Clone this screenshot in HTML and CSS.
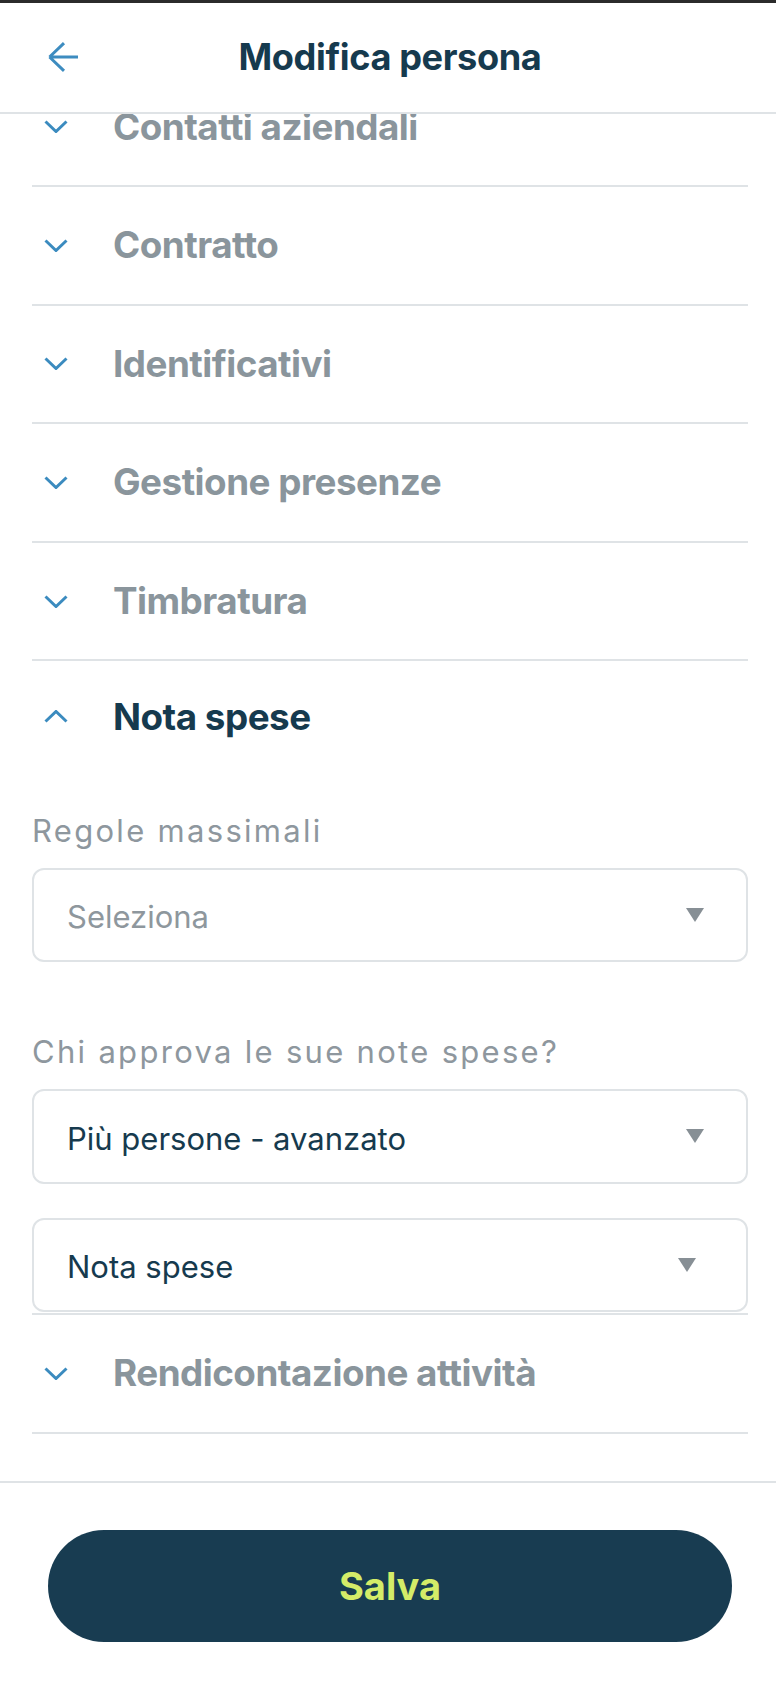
FILE: index.html
```html
<!DOCTYPE html>
<html lang="it">
<head>
<meta charset="utf-8">
<title>Modifica persona</title>
<link rel="stylesheet" href="styles.css">
</head>
<body>
<div class="app">
  <div class="statusbar"></div>
  <header class="topbar">
    <button class="back" aria-label="Indietro">
      <svg width="32" height="30" viewBox="0 0 32 30"><path d="M2.5 15 L17 1.2 M2.5 15 L17 28.8 M2.5 15 H31" fill="none" stroke="#3d8cc0" stroke-width="3"/></svg>
    </button>
    <h1 class="title">Modifica persona</h1>
    <span class="spacer"></span>
  </header>

  <main class="content">
    <div class="list">
      <div class="acc">
        <div class="acc-head">
          <svg class="chev" width="24" height="13" viewBox="0 0 24 13"><polyline points="1.5,1.5 12,11.5 22.5,1.5" fill="none" stroke="#3b8bbf" stroke-width="3"/></svg>
          <span class="acc-title">Contatti aziendali</span>
        </div>
      </div>
      <div class="acc">
        <div class="acc-head">
          <svg class="chev" width="24" height="13" viewBox="0 0 24 13"><polyline points="1.5,1.5 12,11.5 22.5,1.5" fill="none" stroke="#3b8bbf" stroke-width="3"/></svg>
          <span class="acc-title">Contratto</span>
        </div>
      </div>
      <div class="acc">
        <div class="acc-head">
          <svg class="chev" width="24" height="13" viewBox="0 0 24 13"><polyline points="1.5,1.5 12,11.5 22.5,1.5" fill="none" stroke="#3b8bbf" stroke-width="3"/></svg>
          <span class="acc-title">Identificativi</span>
        </div>
      </div>
      <div class="acc">
        <div class="acc-head">
          <svg class="chev" width="24" height="13" viewBox="0 0 24 13"><polyline points="1.5,1.5 12,11.5 22.5,1.5" fill="none" stroke="#3b8bbf" stroke-width="3"/></svg>
          <span class="acc-title">Gestione presenze</span>
        </div>
      </div>
      <div class="acc">
        <div class="acc-head">
          <svg class="chev" width="24" height="13" viewBox="0 0 24 13"><polyline points="1.5,1.5 12,11.5 22.5,1.5" fill="none" stroke="#3b8bbf" stroke-width="3"/></svg>
          <span class="acc-title">Timbratura</span>
        </div>
      </div>
      <div class="acc acc-open">
        <div class="acc-head">
          <svg class="chev chev-up" width="24" height="13" viewBox="0 0 24 13"><polyline points="1.5,11.5 12,1.5 22.5,11.5" fill="none" stroke="#3b8bbf" stroke-width="3"/></svg>
          <span class="acc-title">Nota spese</span>
        </div>
        <div class="acc-panel">
          <div class="field">
            <label class="field-label">Regole massimali</label>
            <div class="select">
              <span class="select-value placeholder">Seleziona</span>
              <span class="caret"></span>
            </div>
          </div>
          <div class="field field-second">
            <label class="field-label">Chi approva le sue note spese?</label>
            <div class="select">
              <span class="select-value">Più persone - avanzato</span>
              <span class="caret"></span>
            </div>
            <div class="select select-inner">
              <span class="select-value">Nota spese</span>
              <span class="caret"></span>
            </div>
          </div>
        </div>
      </div>
      <div class="acc">
        <div class="acc-head">
          <svg class="chev" width="24" height="13" viewBox="0 0 24 13"><polyline points="1.5,1.5 12,11.5 22.5,1.5" fill="none" stroke="#3b8bbf" stroke-width="3"/></svg>
          <span class="acc-title">Rendicontazione attività</span>
        </div>
      </div>
    </div>
  </main>

  <footer class="bottombar">
    <button class="save">Salva</button>
  </footer>
</div>
</body>
</html>
```

FILE: styles.css
```css
* { box-sizing: border-box; }

html, body {
  margin: 0;
  padding: 0;
  background: #ffffff;
}

body {
  font-family: "Inter", "Liberation Sans", sans-serif;
  color: #163a4e;
}

.app {
  width: 776px;
  height: 1690px;
  display: flex;
  flex-direction: column;
  overflow: hidden;
}

.statusbar {
  height: 3px;
  flex: 0 0 3px;
  background: #2b2b2b;
}

.topbar {
  flex: 0 0 110.7px;
  height: 110.7px;
  display: grid;
  grid-template-columns: 100px 1fr 96px;
  align-items: center;
  border-bottom: 2px solid #dfe3e6;
  background: #fff;
}

.back {
  justify-self: start;
  margin-left: 47px;
  padding: 0;
  border: 0;
  background: none;
  display: flex;
  width: 32px;
  height: 30px;
}

.title {
  margin: 0;
  text-align: center;
  font-size: 36.2px;
  font-weight: 700;
  letter-spacing: -0.4px;
  color: #163a4e;
  line-height: 40px;
}

.content {
  flex: 1 1 auto;
  overflow: hidden;
}

.list {
  margin-top: -45.3px;
  padding: 0 28.5px 0 32px;
}

.acc {
  border-bottom: 2px solid #dfe3e6;
}

.acc-head {
  height: 116.6px;
  display: flex;
  align-items: center;
  padding-left: 12px;
}

.chev {
  flex: 0 0 24px;
  margin-right: 45px;
}

.chev-up {
  margin-top: -6px;
}

.acc-title {
  font-size: 36.8px;
  font-weight: 700;
  letter-spacing: -0.5px;
  color: #8a959c;
  line-height: 40px;
}

.acc-open .acc-title {
  color: #163a4e;
  margin-top: -6px;
}

.acc-panel {
  padding-bottom: 1px;
}

.field {
  display: flex;
  flex-direction: column;
}

.field:first-child {
  padding-top: 31px;
}

.field-second {
  padding-top: 68.3px;
}

.field-label {
  font-size: 31px;
  line-height: 40px;
  padding-top: 2px;
  margin-bottom: 16.7px;
  font-weight: 400;
  letter-spacing: 2.3px;
  color: #8e979e;
}

.select {
  height: 94.5px;
  border: 2px solid #dfe3e6;
  border-radius: 12px;
  display: flex;
  align-items: center;
  padding: 0 42px 0 33px;
}

.select + .select {
  margin-top: 34px;
}

.select-value {
  flex: 1 1 auto;
  font-size: 31px;
  font-weight: 400;
  line-height: 40px;
  padding-top: 5px;
  color: #163a4e;
}

.select-value.placeholder {
  color: #8e979d;
}

.caret {
  width: 0;
  height: 0;
  border-left: 9.3px solid transparent;
  border-right: 9.3px solid transparent;
  border-top: 14px solid #878f95;
}

.select-inner {
  padding-right: 50px;
}

.bottombar {
  flex: 0 0 209.3px;
  border-top: 2px solid #dfe3e6;
  padding: 47.3px 44px 48.3px 48px;
  display: flex;
}

.save {
  flex: 1 1 auto;
  border: 0;
  border-radius: 56px;
  background: #183c51;
  color: #d4ec68;
  font-family: "Inter", "Liberation Sans", sans-serif;
  font-size: 38px;
  font-weight: 700;
  letter-spacing: 0;
  padding: 0;
}
```
